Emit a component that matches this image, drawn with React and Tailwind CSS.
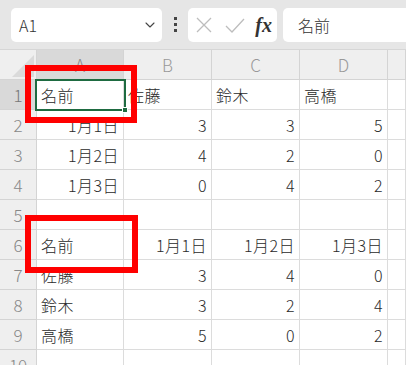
import { ChevronDown } from "lucide-react";

const cols = ["A", "B", "C", "D", ""];

const rows = [
  ["名前", "佐藤", "鈴木", "高橋", ""],
  ["1月1日", "3", "3", "5", ""],
  ["1月2日", "4", "2", "0", ""],
  ["1月3日", "0", "4", "2", ""],
  ["", "", "", "", ""],
  ["名前", "1月1日", "1月2日", "1月3日", ""],
  ["佐藤", "3", "4", "0", ""],
  ["鈴木", "3", "2", "4", ""],
  ["高橋", "5", "0", "2", ""],
  ["", "", "", "", ""],
];

// text cells align left, numbers/dates align right (Excel default)
const isRight = (v) => /^[0-9]/.test(v);

export default function App() {
  return (
    <div
      className="relative w-[406px] h-[365px] overflow-hidden bg-white text-[#2a2a2a]"
      style={{ fontFamily: '"Noto Sans CJK JP", "Noto Sans", sans-serif' }}
    >
      {/* Formula bar */}
      <div className="h-[50px] bg-[#e6e6e6] flex items-center gap-[6px] pl-[11px] border-b border-[#d6d6d6]">
        <div className="w-[151px] h-[34px] bg-white rounded-[5px] flex items-center justify-between pl-[8px] pr-[4px]">
          <span className="text-[16px] text-[#333] font-light">A1</span>
          <ChevronDown size={16} strokeWidth={1.6} className="text-[#444]" />
        </div>
        <div className="flex flex-col gap-[3px] w-[14px] items-center">
          <span className="w-[3px] h-[3px] bg-[#444]" />
          <span className="w-[3px] h-[3px] bg-[#444]" />
          <span className="w-[3px] h-[3px] bg-[#444]" />
        </div>
        <div className="w-[89px] h-[34px] bg-white rounded-[5px] flex items-center justify-between pl-[6px] pr-[5px]">
          <svg width="20" height="20" viewBox="0 0 20 20" className="text-[#bdbdbd]">
            <path d="M3 3 L17 17 M17 3 L3 17" stroke="currentColor" strokeWidth="1.3" fill="none" />
          </svg>
          <svg width="22" height="20" viewBox="0 0 22 20" className="text-[#bdbdbd]">
            <path d="M2 11 L8 17 L20 4" stroke="currentColor" strokeWidth="1.3" fill="none" />
          </svg>
          <span
            className="text-[20px] italic font-bold text-[#333] leading-none"
            style={{ fontFamily: '"Liberation Serif", serif' }}
          >
            fx
          </span>
        </div>
        <div className="flex-1 h-[34px] bg-white rounded-l-[5px] flex items-center pl-[15px]">
          <span className="text-[16px] text-[#333] font-light">名前</span>
        </div>
      </div>

      {/* Grid */}
      <div className="grid grid-cols-[37px_87px_88px_88px_88px_1fr]">
        {/* header row */}
        <div className="relative h-[30px] bg-[#efefef] border-r border-b border-[#d4d4d4] overflow-hidden">
          <div className="absolute right-[2px] bottom-[2px] w-0 h-0 border-l-[22px] border-l-transparent border-b-[22px] border-b-[#dadada]" />
        </div>
        {cols.map((c, i) => (
          <div
            key={c + i}
            className={
              "h-[30px] flex items-center justify-center text-[17px] font-light border-r border-b border-[#d4d4d4] " +
              (i === 0 ? "bg-[#d9d9d9] text-[#888]" : "bg-[#efefef] text-[#999]")
            }
          >
            {c}
          </div>
        ))}

        {rows.map((r, ri) => [
          <div
            key={"h" + ri}
            className={
              "h-[30px] flex items-center justify-center text-[17px] font-light border-r border-b border-[#d4d4d4] " +
              (ri === 0 ? "bg-[#d9d9d9] text-[#777]" : "bg-[#efefef] text-[#888]")
            }
          >
            {ri + 1}
          </div>,
          ...r.map((v, ci) => (
            <div
              key={ri + "-" + ci}
              className={
                "h-[30px] flex items-center text-[16px] font-light px-[4px] border-r border-b border-[#dcdcdc] whitespace-nowrap tracking-[0.5px] " +
                (isRight(v) ? "justify-end" : "justify-start")
              }
            >
              {v}
            </div>
          )),
        ])}
      </div>

      {/* selected cell A1 */}
      <div className="absolute left-[35px] top-[79px] w-[91px] h-[32px] border-2 border-[#1e6b41]" />
      <div className="absolute left-[122px] top-[107px] w-[6px] h-[6px] bg-[#1e6b41] border border-white" />

      {/* red highlight boxes */}
      <div className="absolute left-[25px] top-[65px] w-[112px] h-[58px] border-[6px] border-[#ff0000]" />
      <div className="absolute left-[25px] top-[215px] w-[113px] h-[58px] border-[6px] border-[#ff0000]" />
    </div>
  );
}
